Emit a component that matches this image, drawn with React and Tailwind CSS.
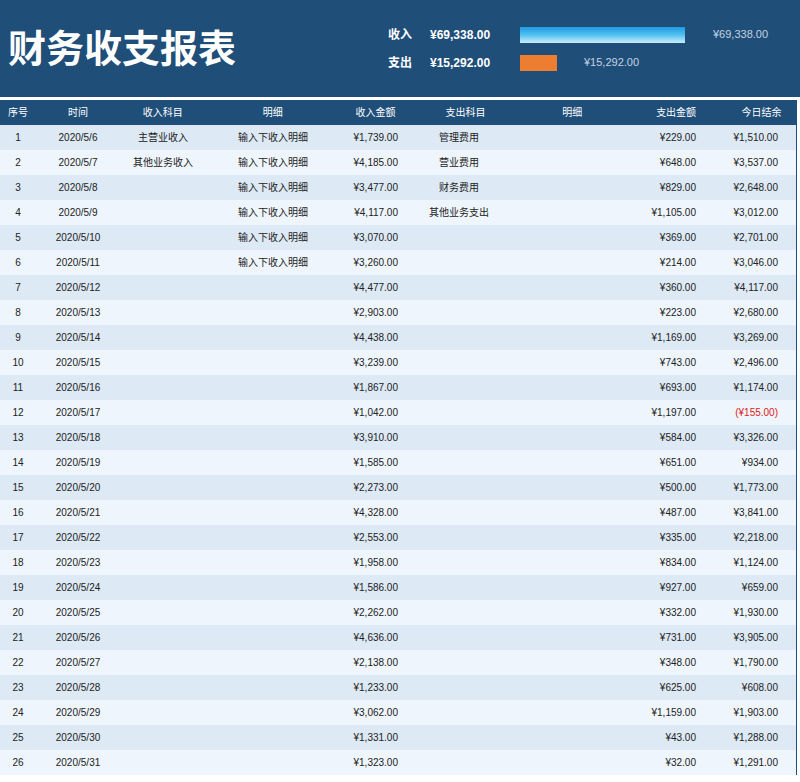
const inc=[["主营业收入","输入下收入明细","¥1,739.00","管理费用","¥229.00","¥1,510.00"],["其他业务收入","输入下收入明细","¥4,185.00","营业费用","¥648.00","¥3,537.00"],["","输入下收入明细","¥3,477.00","财务费用","¥829.00","¥2,648.00"],["","输入下收入明细","¥4,117.00","其他业务支出","¥1,105.00","¥3,012.00"],["","输入下收入明细","¥3,070.00","","¥369.00","¥2,701.00"],["","输入下收入明细","¥3,260.00","","¥214.00","¥3,046.00"],["","","¥4,477.00","","¥360.00","¥4,117.00"],["","","¥2,903.00","","¥223.00","¥2,680.00"],["","","¥4,438.00","","¥1,169.00","¥3,269.00"],["","","¥3,239.00","","¥743.00","¥2,496.00"],["","","¥1,867.00","","¥693.00","¥1,174.00"],["","","¥1,042.00","","¥1,197.00","(¥155.00)"],["","","¥3,910.00","","¥584.00","¥3,326.00"],["","","¥1,585.00","","¥651.00","¥934.00"],["","","¥2,273.00","","¥500.00","¥1,773.00"],["","","¥4,328.00","","¥487.00","¥3,841.00"],["","","¥2,553.00","","¥335.00","¥2,218.00"],["","","¥1,958.00","","¥834.00","¥1,124.00"],["","","¥1,586.00","","¥927.00","¥659.00"],["","","¥2,262.00","","¥332.00","¥1,930.00"],["","","¥4,636.00","","¥731.00","¥3,905.00"],["","","¥2,138.00","","¥348.00","¥1,790.00"],["","","¥1,233.00","","¥625.00","¥608.00"],["","","¥3,062.00","","¥1,159.00","¥1,903.00"],["","","¥1,331.00","","¥43.00","¥1,288.00"],["","","¥1,323.00","","¥32.00","¥1,291.00"]];
const f={fontFamily:'"Liberation Sans","Noto Sans CJK SC",sans-serif'};
export default function App(){
return <div style={f} className="w-[800px] h-[782px] bg-white overflow-hidden">
<div className="h-[97px] bg-[#1f4e79] flex items-center pl-2">
<div className="text-white text-[38px] font-bold w-[380px] leading-none">财务收支报表</div>
<div className="flex flex-col gap-[12px] text-white text-[12px] font-bold">
<div className="flex items-center h-[16px]"><span className="w-[42px]">收入</span><span className="w-[90px]">¥69,338.00</span><div className="w-[165px] h-[16px] bg-gradient-to-b from-[#1e9be0] via-[#4fc0f0] to-[#c8ecfb]"></div><span className="ml-[28px] font-normal text-[#c5d3e0] text-[11px]">¥69,338.00</span></div>
<div className="flex items-center h-[16px]"><span className="w-[42px]">支出</span><span className="w-[90px]">¥15,292.00</span><div className="w-[37px] h-[16px] bg-[#ed7d31]"></div><span className="ml-[27px] font-normal text-[#c5d3e0] text-[11px]">¥15,292.00</span></div>
</div></div>
<div className="h-[3px] bg-white"></div>
<div className="w-[797px] border-r border-[#1f4e79] text-[10px]">
<div className="flex h-[25px] items-center bg-[#1f4e79] text-white">
{[["序号",36],["时间",84],["收入科目",86],["明细",134],["收入金额",72],["支出科目",108],["明细",106],["支出金额",102],["今日结余",69]].map(([t,w],i)=><div key={i} style={{width:w}} className="text-center">{t}</div>)}
</div>
{inc.map((r,i)=><div key={i} className={`flex h-[25px] items-center text-[#222] ${i%2?"bg-[#eef5fc]":"bg-[#dde9f5]"}`}>
<div className="w-[36px] text-center">{i+1}</div>
<div className="w-[84px] text-center">2020/5/{i+6}</div>
<div className="w-[86px] text-center">{r[0]}</div>
<div className="w-[134px] text-center">{r[1]}</div>
<div className="w-[58px] text-right">{r[2]}</div>
<div className="w-[122px] text-center">{r[3]}</div>
<div className="w-[176px] text-right">{r[4]}</div>
<div className="w-[82px] text-right">{r[5].startsWith("(")?<span className="text-[#e02020]">{r[5]}</span>:r[5]}</div>
</div>)}
</div></div>}
